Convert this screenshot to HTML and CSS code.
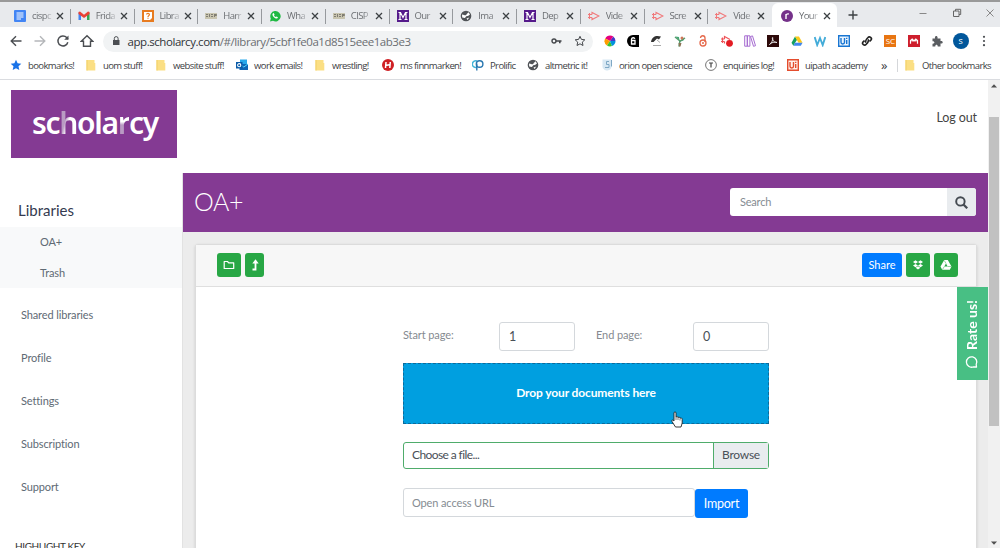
FILE: index.html
```
<!DOCTYPE html>
<html lang="en">
<head>
    <meta charset="UTF-8">
    <meta name="viewport" content="width=device-width, initial-scale=1.0">
    <title>Your Library</title>
    <link rel="stylesheet" href="styles.css">
</head>
<body>

    <!-- Shared icons -->
    <svg class="sprite" aria-hidden="true">
        <symbol id="close" viewBox="0 0 8 8"><path d="M1 1l6 6M7 1L1 7" stroke="#3c4043" stroke-width="1.3"/></symbol>
        <symbol id="folder" viewBox="0 0 12 12"><path d="M1.5 1h8v3h.8v7.500h-8.800z" fill="#fbdf84"/><path d="M1.500 1h1v10.500h-1z" fill="#f2cf66"/></symbol>
        <symbol id="cisp" viewBox="0 0 12 12"><path d="M0 3h12v6H0z" fill="#c9c5b0"/><path d="M1 4.500h2M1 6.500h2M4.500 4v3M6 4.500h2M6 6.500h2M9.500 4v3M10 4.500h1.500v1H10" stroke="#77756b" stroke-width=".9" fill="none"/></symbol>
        <symbol id="uni" viewBox="0 0 12 12"><path d="M0 0h12v12H0z" fill="#551a8b"/><path d="M1.500 2.500h2L6 7.500l2.500-5h2M3 2.500v7M9 2.500v7M1.500 9.500h3M7.500 9.500h3" stroke="#fff" stroke-width="1.200" fill="none"/></symbol>
        <symbol id="globe" viewBox="0 0 12 12"><circle cx="6" cy="6" r="5.300" fill="#505357"/><path d="M2 4.500c2 0 2.500 1 3.800.8.900-.2.400-1.500 1.500-1.800L8.500 2.300 10 4.500 8 6 6.200 6.200 5 8 2.200 7.400zM6.500 8.400l2.800-.8-1.800 2.500z" fill="#fff"/></symbol>
        <symbol id="video" viewBox="0 0 12 12"><path d="M4 4.500V2.500L11 6l-7 3.500v-2M0 4.500h4M0 7.500h4M1.500 3v6" stroke="#f0797b" stroke-width="1.100" fill="none"/></symbol>
    </svg>

    <!-- Browser window -->
    <div class="tabs">
        <div class="tab"><svg class="icon" viewBox="0 0 12 12"><rect width="12" height="12" rx="1" fill="#4285f4"/><path d="M2.500 3h7M2.500 5h7M2.500 7h7M2.500 9h4.500" stroke="#fff"/></svg><span>cispc</span><svg class="close"><use href="#close"/></svg></div>
        <div class="tab"><svg class="icon" viewBox="0 0 12 12"><path d="M.5 2.500V10h2.500V5z" fill="#4285f4"/><path d="M11.500 2.500V10H9V5z" fill="#34a853"/><path d="M.5 2L2 1.500l4 3.300 4-3.300 1.500.5v2L6 8 .5 4z" fill="#ea4335"/></svg><span>Frida</span><svg class="close"><use href="#close"/></svg></div>
        <div class="tab"><svg class="icon" viewBox="0 0 12 12"><path d="M0 0h12v12H0z" fill="#e77b20"/><path d="M2 2h8v6L8 10H2z" fill="#fff"/><path d="M4.500 4.500C4.700 3 7.500 3 7.400 4.700 7.300 5.700 6 5.700 6 7M6 7.800v1" stroke="#e77b20" stroke-width="1.200" fill="none"/></svg><span>Libra</span><svg class="close"><use href="#close"/></svg></div>
        <div class="tab"><svg class="icon"><use href="#cisp"/></svg><span>Harr</span><svg class="close"><use href="#close"/></svg></div>
        <div class="tab"><svg class="icon" viewBox="0 0 12 12"><path d="M1 11.500l.8-3A5.200 5.200 0 1 1 4 10.800z" fill="#1fb943"/><path d="M3.800 3.500l1-.4.8 1.600-.6.800c.4.800 1 1.300 1.800 1.600l.7-.7 1.400.8c0 1.300-1.500 1.600-2.600 1C4.700 7.500 3.500 6 3.400 4.600z" fill="#fff"/></svg><span>Wha</span><svg class="close"><use href="#close"/></svg></div>
        <div class="tab"><svg class="icon"><use href="#cisp"/></svg><span>CISP</span><svg class="close"><use href="#close"/></svg></div>
        <div class="tab"><svg class="icon"><use href="#uni"/></svg><span>Our</span><svg class="close"><use href="#close"/></svg></div>
        <div class="tab"><svg class="icon"><use href="#globe"/></svg><span>Ima</span><svg class="close"><use href="#close"/></svg></div>
        <div class="tab"><svg class="icon"><use href="#uni"/></svg><span>Dep</span><svg class="close"><use href="#close"/></svg></div>
        <div class="tab"><svg class="icon"><use href="#video"/></svg><span>Vide</span><svg class="close"><use href="#close"/></svg></div>
        <div class="tab"><svg class="icon"><use href="#video"/></svg><span>Scre</span><svg class="close"><use href="#close"/></svg></div>
        <div class="tab last"><svg class="icon"><use href="#video"/></svg><span>Vide</span><svg class="close"><use href="#close"/></svg></div>
        <div class="tab active"><svg class="icon" viewBox="0 0 12 12"><circle cx="6" cy="6" r="6" fill="#75328a"/><path d="M5 9V4M5 5.200C5.500 4 6.500 3.700 7.800 4" stroke="#fff" stroke-width="1.400" fill="none"/></svg><span>Your</span><svg class="close"><use href="#close"/></svg></div>
        <svg class="new-tab" viewBox="0 0 10 10"><path d="M5 .5v9M.5 5h9" stroke="#3c4043" stroke-width="1.400"/></svg>
        <div class="window-buttons">
            <svg viewBox="0 0 10 10"><path d="M1.500 5.500h7" stroke="#888"/></svg>
            <svg viewBox="0 0 10 10"><path d="M1.500 3h5.500v5.500H1.500zM3.500 3V1.300h5.200v5.200H7" stroke="#666" fill="none"/></svg>
            <svg viewBox="0 0 10 10"><path d="M1.500 1.500l7 7M8.500 1.500l-7 7" stroke="#888"/></svg>
        </div>
    </div>

    <div class="toolbar">
        <div class="nav-icons">
            <svg viewBox="0 0 14 14"><path d="M12.500 7H2.500M7 2.200L2.200 7 7 11.800" stroke="#4b4e52" stroke-width="1.400" fill="none"/></svg>
            <svg viewBox="0 0 14 14"><path d="M1.500 7h10M7 2.200L11.800 7 7 11.800" stroke="#b5b7ba" stroke-width="1.400" fill="none"/></svg>
            <svg viewBox="0 0 14 14"><path d="M11.800 8.200A5 5 0 1 1 10.700 3.600L12 5" stroke="#4b4e52" stroke-width="1.500" fill="none"/><path d="M12.500 1.500v4.300H8.200z" fill="#4b4e52"/></svg>
            <svg viewBox="0 0 14 14"><path d="M1.300 7.200L7 1.700l5.700 5.500H10.500v5.100h-7V7.200z" stroke="#4b4e52" stroke-width="1.400" fill="none"/></svg>
        </div>
        <div class="address">
            <svg class="lock" viewBox="0 0 8 10"><path d="M1 4h6.500v5H1z" fill="#4b4e52"/><path d="M2.300 4V2.500a1.900 1.900 0 0 1 3.800 0V4" stroke="#4b4e52" fill="none"/></svg>
            <p class="url"><b>app.scholarcy.com</b>/#/library/5cbf1fe0a1d8515eee1ab3e3</p>
            <svg class="key" viewBox="0 0 11 8"><circle cx="3" cy="4" r="2" stroke="#44474b" stroke-width="1.400" fill="none"/><path d="M5 4h5.500M8.800 4v2.300" stroke="#44474b" stroke-width="1.600"/></svg>
            <svg class="star" viewBox="0 0 12 12"><path d="M6 1.300l1.400 3.100 3.400.4-2.500 2.300.7 3.400L6 8.800l-3 1.700.7-3.400L1.200 4.800l3.400-.4z" stroke="#44474b" fill="none"/></svg>
        </div>
        <div class="extensions">
            <svg viewBox="0 0 12 12"><path d="M6 6V.5A5.500 5.500 0 0 0 1.200 3.500z" fill="#e4007f"/><path d="M6 6L1.200 3.500A5.500 5.500 0 0 0 3 10.500z" fill="#ff9c00"/><path d="M6 6l-3 4.500a5.500 5.500 0 0 0 5 .6z" fill="#3bc42d"/><path d="M6 6l2 5a5.500 5.500 0 0 0 3.500-5z" fill="#0092db"/><path d="M6 6h5.500A5.500 5.500 0 0 0 9.300 1.600z" fill="#4738c9"/><path d="M6 6l3.300-4.400A5.500 5.500 0 0 0 6 .5z" fill="#e4007f"/></svg>
            <svg viewBox="0 0 12 12"><path d="M6 0h6v12H6A6 6 0 0 1 6 0z"/><path d="M4.500 5.500H8V9H4.500zM4.500 5.500V4.300c0-2 3-2 3.300-.5" stroke="#fff" stroke-width="1.300" fill="none"/></svg>
            <svg viewBox="0 0 12 12"><path d="M1 7C2 1.500 6 0 11 1.500L9 4.500 7 3.500 3.500 7z" fill="#333"/><path d="M7 5l3 2.500M3 10.500h8" stroke="#aaa" fill="none"/></svg>
            <svg viewBox="0 0 12 12"><path d="M5.500 6L1.500 1.500 5 2zM6.500 5L11 2.500 9 6z" fill="#45a878"/><path d="M1 2l5 4M11 3L6 6.500M6 5l-1 6.500" stroke="#559d6e" stroke-width="1.500"/><circle cx="8" cy="3" r="1.500" fill="#ce775a"/><path d="M4.500 8h3l-1 3.500H5z" fill="#8b7355"/></svg>
            <svg viewBox="0 0 12 12"><path d="M3.500 3C3.500 0 8 0 8 3v4" stroke="#e5684a" stroke-width="1.300" fill="none"/><circle cx="6" cy="8" r="3" stroke="#e5684a" stroke-width="1.300" fill="none"/><circle cx="6" cy="8" r="1" fill="#e5684a"/></svg>
            <svg viewBox="0 0 12 12"><path d="M3.500 4V1.500L9 4.500M0 4h3.500M0 6.500h3.500M1.500 2.500v5.500M3.500 6.500v2" stroke="#ef555a" stroke-width="1.200" fill="none"/><circle cx="8.500" cy="8.300" r="3.400" fill="#e31b23"/></svg>
            <svg viewBox="0 0 12 12"><path d="M.7.800h2.600v10.400H.7zM3.300.800h2.600v10.400H3.300zM6.500 1.500l2-.6 3 9.800-2 .6z" stroke="#a56bd0" fill="none"/></svg>
            <svg viewBox="0 0 12 12"><path d="M0 0h12v12H0z" fill="#2d0a0a"/><path d="M2.500 9.500C4 9 6.500 4.500 5.700 2.500c-.8-.4-.5 5 4.300 5C8 6.500 4 7.500 2.500 9.500z" stroke="#eee" stroke-width=".9" fill="none"/></svg>
            <svg viewBox="0 0 12 12"><path d="M4 1.500L.5 7.800l1.800 3L6 4.800z" fill="#14a05d"/><path d="M4 1.500h4l3.500 6.300h-4z" fill="#fbc91b"/><path d="M2.300 10.800h7.500l1.700-3H4z" fill="#4187ed"/></svg>
            <svg viewBox="0 0 12 12"><path d="M.7 2l2.500 8L6 3l2.700 7L11.300 2" stroke="#43acd9" stroke-width="1.900" fill="none"/></svg>
            <svg viewBox="0 0 12 12"><path d="M.7.700h10.600v10.600H.7z" fill="#edf6ff" stroke="#1976d2" stroke-width="1.400"/><path d="M3 3v4.200C3 9.500 6.500 9.500 6.500 7.200V3M8.700 5v4M8.700 2.700V4" stroke="#1976d2" stroke-width="1.400" fill="none"/></svg>
            <svg viewBox="0 0 12 12"><path d="M5 7.500C3.500 6 5 4.500 7 2.500 8.500.8 11.500 3 10 5L8.500 6.500M7 4.500C8.500 6 7 7.500 5 9.500 3.500 11.200.5 9 2 7l1.500-1.500" stroke="#222" stroke-width="1.700" fill="none"/></svg>
            <span class="ext-badge orange">SC</span>
            <svg viewBox="0 0 12 12"><path d="M0 0h12v12H0z" fill="#ce1f2d"/><path d="M2.500 8.800V5.500L4.200 4 6 6l1.800-2 1.700 1.500v3.300M4.200 4v2.500M7.800 4v2.500" stroke="#fff" stroke-width="1.200" fill="none"/></svg>
            <svg viewBox="0 0 12 12"><path d="M1.500 3.500H4C3.200.3 7.300.3 6.500 3.500H9.500V6C12.500 5.500 12.500 9 9.500 8.500V11.500H6.700C7 9 4 9 4.300 11.500H1.500V8.700C4 9 4 6 1.500 6.300z" fill="#5a5d61"/></svg>
            <span class="avatar">s</span>
            <svg viewBox="0 0 12 12"><g fill="#4b4e52"><circle cx="6" cy="1.800" r="1.100"/><circle cx="6" cy="6" r="1.100"/><circle cx="6" cy="10.200" r="1.100"/></g></svg>
        </div>
    </div>

    <div class="bookmarks">
        <div class="bookmark"><svg class="icon" viewBox="0 0 12 12"><path d="M6 .8l1.600 3.500 3.700.4-2.800 2.600.8 3.800L6 9.200l-3.300 1.900.8-3.800L.7 4.700l3.700-.4z" fill="#1a73e8"/></svg>bookmarks!</div>
        <div class="bookmark"><svg class="icon"><use href="#folder"/></svg>uom stuff!</div>
        <div class="bookmark"><svg class="icon"><use href="#folder"/></svg>website stuff!</div>
        <div class="bookmark"><svg class="icon" viewBox="0 0 12 12"><path d="M4 .5h7v5H4z" fill="#28a8ea"/><path d="M3.500 5H12v6H3.500z" fill="#1066b5"/><path d="M3.500 5l4.300 3L12 5" stroke="#50d9ff" fill="none"/><path d="M0 3h6.500v6.500H0z" fill="#0a5ba8"/><circle cx="3.200" cy="6.200" r="1.600" stroke="#fff" stroke-width="1.100" fill="none"/></svg>work emails!</div>
        <div class="bookmark"><svg class="icon"><use href="#folder"/></svg>wrestling!</div>
        <div class="bookmark"><svg class="icon" viewBox="0 0 12 12"><circle cx="6" cy="6" r="6" fill="#cf2024"/><path d="M4 3L3.500 9M8.300 3L7.800 9M3.500 6.500l5-1" stroke="#fff" stroke-width="1.500"/></svg>ms finnmarken!</div>
        <div class="bookmark"><svg class="icon" viewBox="0 0 12 12"><path d="M5 8.300A3.400 3.400 0 1 1 5 2" stroke="#42b5d8" stroke-width="1.500" fill="none"/><circle cx="7.600" cy="5" r="3.300" stroke="#2877b0" stroke-width="1.400" fill="none"/><path d="M4.800 4.500v7" stroke="#2877b0" stroke-width="1.400"/></svg>Prolific</div>
        <div class="bookmark"><svg class="icon"><use href="#globe"/></svg>altmetric it!</div>
        <div class="bookmark"><svg class="icon" viewBox="0 0 12 12"><path d="M1.500.5h9v7c0 3-3 4-4.500 4S1.500 10 1.500 7.500z" fill="#d8e8f3"/><path d="M8 2.500H5.500v3H8v3H4M10.500 1v6.500" stroke="#7fa8c5" fill="none"/></svg>orion open science</div>
        <div class="bookmark"><svg class="icon" viewBox="0 0 12 12"><circle cx="6" cy="6" r="5.400" stroke="#666" stroke-width=".9" fill="#fff"/><path d="M4 4h4M6 4v4.500" stroke="#444" stroke-width="1.200"/></svg>enquiries log!</div>
        <div class="bookmark"><svg class="icon" viewBox="0 0 12 12"><path d="M.7.700h10.600v10.600H.7z" fill="#fff0eb" stroke="#e44d2e" stroke-width="1.400"/><path d="M3 3v4.200C3 9.500 6.500 9.500 6.500 7.200V3M8.700 5v4M8.700 2.700V4" stroke="#e44d2e" stroke-width="1.400" fill="none"/></svg>uipath academy</div>
        <div class="more">»</div>
        <div class="bookmark other"><svg class="icon"><use href="#folder"/></svg>Other bookmarks</div>
    </div>

    <!-- Page -->
    <div class="viewport">
        <div class="page">
            <header class="header">
                <div class="logo">sc<span class="fade-h">h</span>ola<span class="fade-r">r</span>cy</div>
                <a class="logout">Log out</a>
            </header>

            <div class="content">
                <aside class="sidebar">
                    <h2>Libraries</h2>
                    <ul class="libraries">
                        <li>OA+</li>
                        <li>Trash</li>
                    </ul>
                    <ul class="menu">
                        <li>Shared libraries</li>
                        <li>Profile</li>
                        <li>Settings</li>
                        <li>Subscription</li>
                        <li>Support</li>
                    </ul>
                    <h3>HIGHLIGHT KEY</h3>
                </aside>

                <main class="main">
                    <div class="title-bar">
                        <h1>OA+</h1>
                        <div class="search">
                            <div class="search-input">Search</div>
                            <div class="search-button"><svg viewBox="0 0 12 12"><circle cx="5" cy="5" r="3.900" stroke="#454b52" stroke-width="1.800" fill="none"/><path d="M7.800 7.800l3.500 3.500" stroke="#454b52" stroke-width="2.100"/></svg></div>
                        </div>
                    </div>

                    <div class="card">
                        <div class="card-header">
                            <div class="btn green"><svg viewBox="0 0 12 12"><path d="M1.200 2.500h3.300l1.200 1.300h5v5.700H1.200z" stroke="#fff" stroke-width="1.200" stroke-linejoin="round" fill="none"/></svg></div>
                            <div class="btn green small"><svg viewBox="0 0 12 12"><path d="M3.500 10.500h3V3" stroke="#fff" stroke-width="1.800" fill="none"/><path d="M6.500.2L9.700 4.400H3.300z" fill="#fff"/></svg></div>
                            <div class="btn blue share">Share</div>
                            <div class="btn green"><svg viewBox="0 0 12 12"><path d="M3.500 1.300L6 3 3.500 4.700 1 3zM8.500 1.300L11 3 8.500 4.700 6 3zM3.500 4.900L6 6.600 3.500 8.200 1 6.600zM8.500 4.900L11 6.600 8.500 8.200 6 6.600zM3.600 8.800L6 7.200l2.400 1.600L6 10.400z" fill="#fff"/></svg></div>
                            <div class="btn green"><svg viewBox="0 0 12 12"><path d="M4.200 1h3.600l3.700 6.500L9.800 10.700H2.200L.5 7.500z" fill="#fff"/><path d="M6 4.500L4.300 7.500h3.400z" fill="#28a745"/><path d="M4.300 7.500L2.500 10.500M7.700 7.500h3.500M6 4.500L4.300 1.500" stroke="#28a745" stroke-width=".5" fill="none"/></svg></div>
                        </div>

                        <div class="form">
                            <div class="pages">
                                <label>Start page:</label>
                                <div class="number">1</div>
                                <label>End page:</label>
                                <div class="number">0</div>
                            </div>
                            <div class="drop-zone">
                                Drop your documents here
                                <svg class="cursor" viewBox="0 0 12 17"><path d="M3 10V2c0-1.500 2-1.500 2 0v4c1-.8 2-.3 2 .5 1-.6 2-.1 2 .7 1.200-.5 2.200 0 2.200 1.200V12L10 16H4.500L1 10.500C.3 9 1.500 8.500 3 10z" fill="#fff" stroke="#222" stroke-width=".9"/><path d="M5 6v3M7 6.500V9M9 7.500V9.500" stroke="#444" stroke-width=".7"/></svg>
                            </div>
                            <div class="file">
                                <div class="file-name">Choose a file...</div>
                                <div class="browse">Browse</div>
                            </div>
                            <div class="import">
                                <div class="url-input">Open access URL</div>
                                <div class="btn blue import-button">Import</div>
                            </div>
                        </div>
                    </div>
                </main>
            </div>

            <div class="rate">
                <svg viewBox="0 0 14 14"><path d="M11.500 12H8.200A5.200 5.200 0 1 1 11.200 9.500z" stroke="#fff" stroke-width="1.300" stroke-linejoin="round" fill="none"/></svg>
                <span>Rate us!</span>
            </div>
        </div>

        <div class="scrollbar">
            <svg viewBox="0 0 10 10"><path d="M2 6.500L5 3.200l3 3.300z" fill="#505050"/></svg>
            <div class="thumb"></div>
            <svg viewBox="0 0 10 10"><path d="M2 3.500L5 6.800l3-3.300z" fill="#505050"/></svg>
        </div>
    </div>

</body>
</html>
```
FILE: styles.css
```
/* Basic Reset */
* {
    margin: 0;
    padding: 0;
    box-sizing: border-box;
}
body {
    width: 1000px;
    height: 548px;
    overflow: hidden;
    display: flex;
    flex-direction: column;
    background: #fff;
    font-family: "Open Sans", sans-serif;
    color: #3c4043;
}
svg {
    display: block;
    flex: none;
}
ul {
    list-style: none;
}
.sprite {
    display: none;
}
.icon {
    width: 12px;
    height: 12px;
}

/* Tabs */
.tabs {
    height: 27px;
    display: flex;
    align-items: center;
    padding: 3px 0 0 7px;
    background: #e8eaed;
    border-top: 2px solid #999;
    font-size: 9.5px;
}
.tab {
    width: 63.750px;
    height: 15px;
    display: flex;
    align-items: center;
    padding-left: 7px;
    border-right: 1px solid #96999d;
    color: #6b6e72;
}
.tab span {
    width: 20px;
    margin: -1px 4px 0 6px;
    letter-spacing: -0.6px;
    white-space: nowrap;
    mask-image: linear-gradient(90deg, #000 60%, rgba(0, 0, 0, 0.2));
}
.close {
    width: 8px;
    height: 8px;
}
.tab.last {
    border: none;
}
.tab.active {
    width: 65px;
    height: 26px;
    padding-left: 9px;
    border: none;
    border-radius: 6px 6px 0 0;
    background: #fff;
}
.new-tab {
    width: 10px;
    height: 10px;
    margin: -2px 0 0 11px;
}
.window-buttons {
    margin: -7px 5px 0 auto;
    display: flex;
    gap: 23.500px;
}
.window-buttons svg {
    width: 10px;
    height: 10px;
}

/* Toolbar */
.toolbar {
    height: 28px;
    display: flex;
    align-items: center;
    padding: 0 10px 0 9px;
}
.nav-icons {
    display: flex;
    gap: 9.500px;
    margin-right: 9px;
}
.nav-icons svg {
    width: 14px;
    height: 14px;
}
.address {
    width: 490px;
    height: 21px;
    display: flex;
    align-items: center;
    padding: 0 7px 0 9px;
    border-radius: 11px;
    background: #f1f3f4;
}
.lock {
    width: 8px;
    height: 10px;
}
.url {
    margin: 0 auto 0 8px;
    font-size: 11.500px;
    letter-spacing: -0.44px;
    color: #6b6e72;
}
.url b {
    font-weight: 400;
    color: #303338;
}
.key {
    width: 11px;
    height: 8px;
    margin-right: 12px;
}
.star {
    width: 12px;
    height: 12px;
}
.extensions {
    flex: 1;
    display: flex;
    align-items: center;
    justify-content: space-between;
    padding-left: 11px;
}
.extensions svg {
    width: 12px;
    height: 12px;
}
.ext-badge {
    width: 12px;
    height: 12px;
    font-size: 8px;
    line-height: 12px;
    text-align: center;
    color: #fff;
}
.orange {
    background: #e87511;
}
.avatar {
    width: 16px;
    height: 16px;
    margin: 0 -2px;
    border-radius: 50%;
    background: #01579b;
    color: #fff;
    font-size: 9px;
    line-height: 15px;
    text-align: center;
}

/* Bookmarks */
.bookmarks {
    height: 25px;
    display: grid;
    grid-template-columns: 75px 70px 81px 78px 68px 90px 55px 74px 104px 82px 94px 16px 1fr;
    align-items: center;
    padding: 0 5px 4px 10px;
    border-bottom: 1px solid #dadce0;
    font-size: 9.5px;
    letter-spacing: -0.6px;
    white-space: nowrap;
}
.bookmark {
    display: flex;
    align-items: center;
    gap: 6px;
}
.more {
    font-size: 13px;
    line-height: 12px;
}
.other {
    padding-left: 6px;
    border-left: 1px solid #d5d7da;
}

/* Page */
.viewport {
    flex: 1;
    min-height: 0;
    display: flex;
    font-family: Lato, sans-serif;
    font-weight: 400;
}
.page {
    position: relative;
    width: 988px;
    height: 468px;
    overflow: hidden;
}
.header {
    height: 93px;
    display: flex;
    justify-content: space-between;
    padding: 10px 11px 0;
}
.logo {
    width: 166px;
    height: 68px;
    padding-left: 21px;
    background: #843a93;
    color: #fff;
    font-family: "Noto Sans", sans-serif;
    font-size: 30px;
    font-weight: 600;
    line-height: 65px;
    letter-spacing: -1.3px;
}
.fade-h, .fade-r {
    background: linear-gradient(105deg, #b99bc3 38%, #fff 52%);
    background-clip: text;
    -webkit-text-fill-color: transparent;
}
.fade-r {
    background-image: linear-gradient(180deg, #fff 48%, #b99bc3 56%);
}
.logout {
    padding-top: 20px;
    font-size: 12.500px;
    line-height: 16px;
    letter-spacing: -0.1px;
    color: #444;
}
.content {
    display: flex;
}

/* Sidebar */
.sidebar {
    width: 183px;
    height: 375px;
    padding-top: 29px;
    overflow: hidden;
    border-right: 1px solid #e2e2e2;
}
.sidebar h2 {
    height: 25px;
    padding-left: 18px;
    font-size: 15px;
    font-weight: 400;
    line-height: 17px;
    color: #343a50;
}
.libraries {
    height: 61px;
    padding-left: 40px;
    background: #f8f9fa;
}
.libraries li {
    height: 31px;
    font-size: 11px;
    line-height: 29px;
    letter-spacing: -0.1px;
    color: #606a74;
}
.menu {
    padding: 6px 0 0 21px;
}
.menu li {
    height: 43px;
    font-size: 11px;
    line-height: 41px;
    letter-spacing: -0.12px;
    color: #606a74;
}
.sidebar h3 {
    padding: 30px 0 0 15px;
    font-size: 10px;
    font-weight: 400;
    line-height: 14px;
    letter-spacing: -0.4px;
    color: #333;
}

/* Main */
.main {
    width: 805px;
    height: 375px;
    background: #ececec;
}
.title-bar {
    height: 59px;
    display: flex;
    justify-content: space-between;
    padding: 15px 12px 0 11px;
    background: #843a93;
}
.title-bar h1 {
    font-size: 25px;
    font-weight: 300;
    line-height: 26px;
    letter-spacing: -0.4px;
    color: #fff;
}
.search {
    width: 246px;
    height: 28px;
    display: flex;
    border-radius: 3px;
    overflow: hidden;
    background: #fff;
}
.search-input {
    flex: 1;
    padding-left: 10px;
    font-size: 11px;
    line-height: 28px;
    letter-spacing: -0.2px;
    color: #858c92;
}
.search-button {
    width: 29px;
    padding: 8px;
    background: #e9ecef;
}
.search-button svg {
    width: 13px;
    height: 13px;
}

/* Card */
.card {
    width: 782px;
    height: 320px;
    margin: 12px 0 0 12px;
    border: 1px solid #dcdcdc;
    border-radius: 3px;
    background: #fff;
    box-shadow: 0 1px 3px rgba(0, 0, 0, 0.15);
}
.card-header {
    height: 42px;
    display: flex;
    gap: 4px;
    padding: 8px 18px 0 21px;
    background: #f7f7f7;
    border-bottom: 1px solid #dfdfdf;
}
.btn {
    width: 24px;
    height: 24px;
    display: flex;
    align-items: center;
    justify-content: center;
    border-radius: 3px;
    color: #fff;
}
.btn svg {
    width: 12px;
    height: 12px;
}
.small {
    width: 19px;
}
.green {
    background: #28a745;
}
.blue {
    background: #007bff;
}
.share {
    width: 40px;
    margin-left: auto;
    padding-bottom: 1px;
    font-size: 11px;
}

/* Upload Form */
.form {
    width: 366px;
    margin: 35px 0 0 207px;
}
.pages {
    height: 41px;
    display: grid;
    grid-template-columns: 96px 97px 97px 76px;
}
.pages label {
    font-size: 11px;
    line-height: 25px;
    letter-spacing: -0.1px;
    color: #858a90;
}
.number {
    width: 76px;
    height: 29px;
    padding-left: 9px;
    border: 1px solid #d4d8dc;
    border-radius: 3px;
    font-size: 12.500px;
    line-height: 28px;
    color: #495057;
}
.drop-zone {
    position: relative;
    height: 61px;
    border: 1px dashed #0c6b9c;
    background: #009fe0;
    color: #fff;
    font-size: 12px;
    font-weight: 700;
    line-height: 58px;
    letter-spacing: -0.12px;
    text-align: center;
}
.cursor {
    position: absolute;
    left: 267px;
    top: 47px;
    width: 12px;
    height: 17px;
}
.file {
    height: 27px;
    display: flex;
    margin-top: 18px;
    border: 1px solid #4fac6b;
    border-radius: 3px;
    font-size: 12px;
    line-height: 24px;
    letter-spacing: -0.25px;
    color: #495057;
}
.file-name {
    flex: 1;
    padding-left: 8px;
    letter-spacing: -0.6px;
}
.browse {
    width: 55px;
    border-left: 1px solid #4fac6b;
    background: #e9ecef;
    text-align: center;
}
.import {
    display: flex;
    margin-top: 19px;
}
.url-input {
    width: 292px;
    height: 29px;
    padding-left: 8px;
    border: 1px solid #d4d8dc;
    border-radius: 3px;
    font-size: 11px;
    line-height: 27px;
    letter-spacing: -0.12px;
    color: #858c92;
}
.import-button {
    width: 53px;
    height: 29px;
    margin-top: 1px;
    font-size: 12.500px;
    letter-spacing: -0.25px;
}

/* Rate Us Tab */
.rate {
    position: absolute;
    right: 0;
    top: 207px;
    width: 31px;
    height: 93px;
    display: flex;
    flex-direction: column-reverse;
    align-items: center;
    gap: 5px;
    padding: 10px 2px 11px 0;
    background: #48bf84;
    color: #fff;
}
.rate svg {
    width: 14px;
    height: 14px;
}
.rate span {
    writing-mode: vertical-rl;
    transform: rotate(180deg);
    font-size: 14px;
    font-weight: 700;
    line-height: 16px;
}

/* Scrollbar */
.scrollbar {
    width: 12px;
    display: flex;
    flex-direction: column;
    align-items: center;
    padding: 1px 1px 0 0;
    background: #f1f1f1;
}
.scrollbar svg {
    width: 10px;
    height: 10px;
}
.thumb {
    width: 10px;
    height: 309px;
    margin: 26px 0 112px;
    background: #c1c1c1;
}
```
